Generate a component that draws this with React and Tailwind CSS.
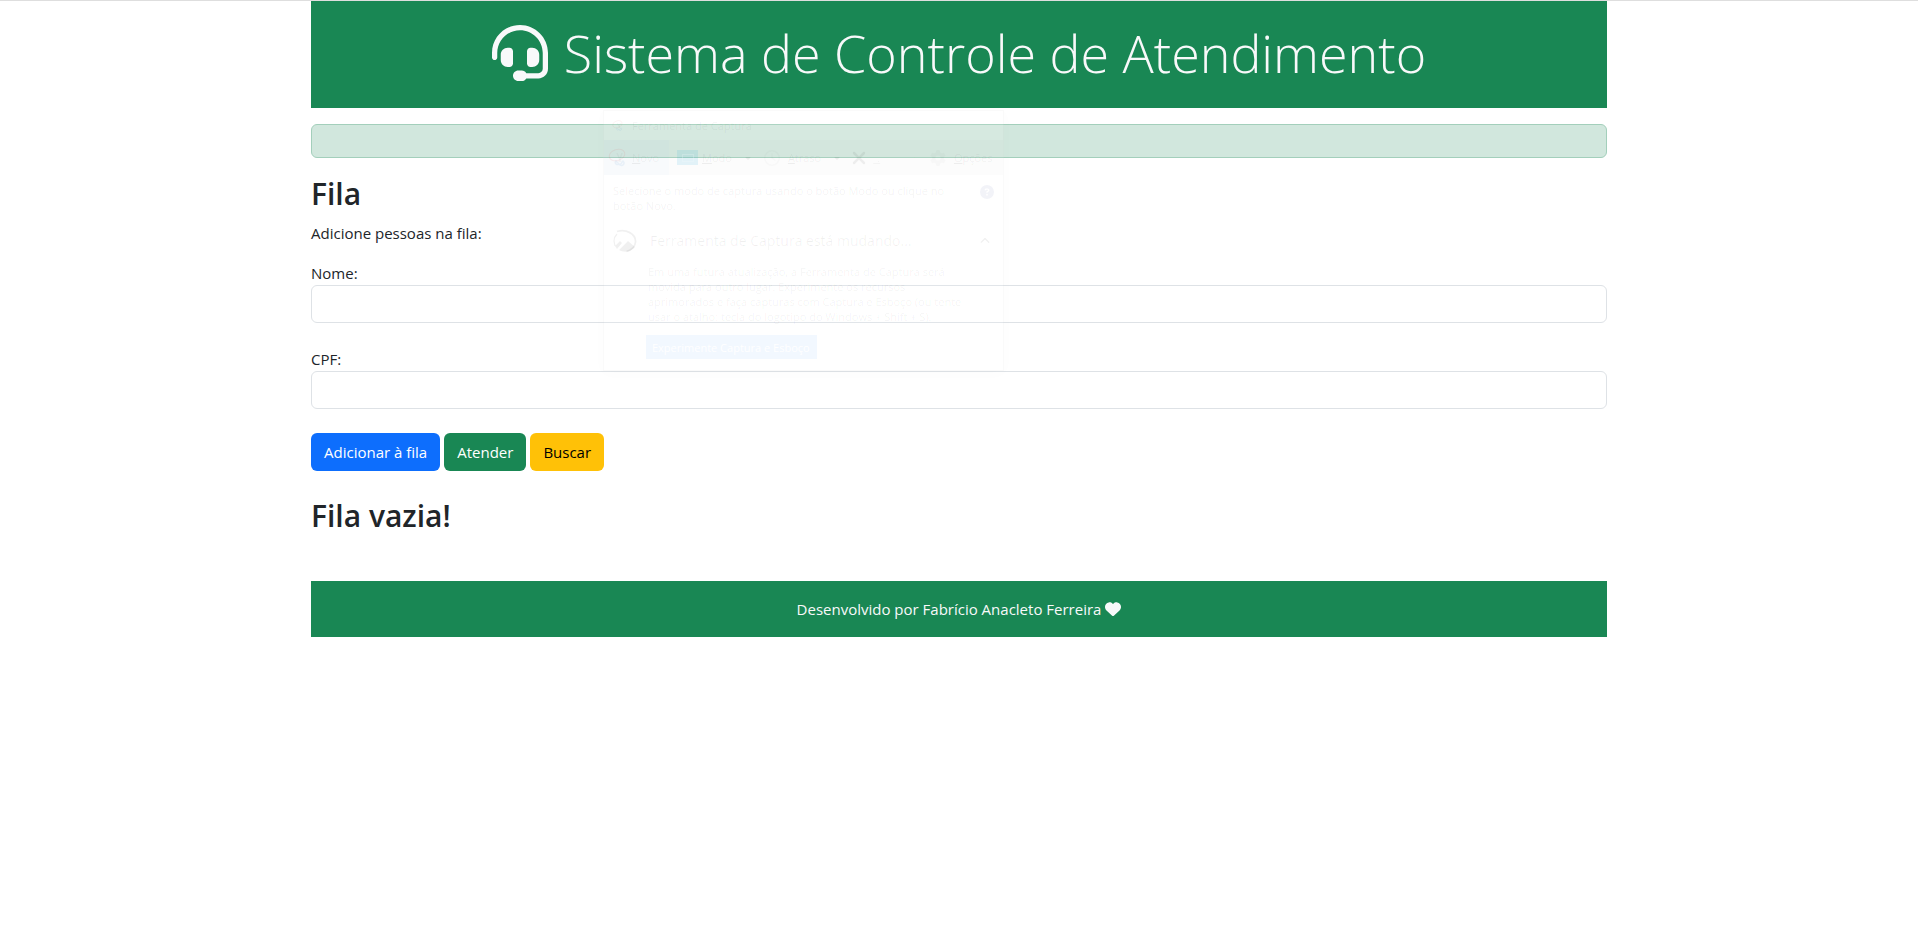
import { FaHeadset, FaHeart, FaCaretDown, FaXmark, FaChevronUp, FaCircleQuestion, FaRegClock, FaGear } from 'react-icons/fa6';

function Field({ id, label }) {
  return (
    <div className="mb-6">
      <label htmlFor={id} className="block">{label}</label>
      <input
        id={id}
        type="text"
        className="block h-[38px] w-full rounded-md border border-[#dee2e6] bg-white px-3 text-[15px] outline-none focus:border-[#86b7fe]"
      />
    </div>
  );
}

function SnipIcon({ className }) {
  return (
    <svg viewBox="0 0 20 20" className={className} fill="none">
      <ellipse cx="9" cy="7" rx="8" ry="5.500" stroke="#e03030" strokeOpacity="0.08" strokeWidth="1" transform="rotate(-18 9 7)" />
      <path d="M9 5l4 9M14 5l-3 9" stroke="#000" strokeOpacity="0.03" strokeWidth="1.500" />
      <path d="M8 13a2 2 0 1 0 3 3zM15 13a2 2 0 1 1-3 4z" stroke="#2f7fd0" strokeOpacity="0.08" strokeWidth="1.500" />
    </svg>
  );
}

function SnippingWindow() {
  return (
    <div
      aria-hidden="true"
      className="pointer-events-none absolute top-[109px] left-[603px] h-[261px] w-[401px] border border-black/2 bg-white/10 text-[11px] leading-[15px] text-black/6 shadow-[0_2px_14px_rgba(0,0,0,0.015)]"
    >
      <div className="flex h-[29px] items-center gap-2 pl-2">
        <SnipIcon className="size-3" />
        <span>Ferramenta de Captura</span>
      </div>
      <div className="flex h-[35px] items-center bg-black/1">
        <div className="flex h-full w-[65px] items-center gap-1 bg-blue-500/2 pl-1">
          <SnipIcon className="size-5" />
          <span><u>N</u>ovo</span>
        </div>
        <div className="ml-2 flex h-[15px] w-[21px] items-center justify-center bg-[#00a0e0]/10">
          <span className="h-2 w-3 border border-white/20" />
        </div>
        <span className="ml-1"><u>M</u>odo</span>
        <FaCaretDown className="ml-3 size-2" />
        <FaRegClock className="ml-3 size-4 text-black/2" />
        <span className="ml-2"><u>A</u>traso</span>
        <FaCaretDown className="ml-3 size-2" />
        <FaXmark className="ml-2 size-5" />
        <span className="ml-1 text-black/3"><u>C</u>ancelar</span>
        <FaGear className="ml-3 size-4 text-black/2" />
        <span className="ml-2"><u>O</u>pções</span>
      </div>
      <div className="flex justify-between px-[9px] pt-2">
        <p className="w-[340px]">Selecione o modo de captura usando o botão Modo ou clique no botão Novo.</p>
        <FaCircleQuestion className="mt-[2px] size-[14px] text-blue-900/6" />
      </div>
      <div className="mt-4 flex items-center px-[9px]">
        <svg viewBox="0 0 24 24" className="size-6" fill="none">
          <path d="M4 2.5C13-.5 23 5 22.500 13c-.5 5-4 8-9 9.500" stroke="currentColor" strokeWidth="1.800" />
          <path d="M1 12C1 9 2 7 4 5M1 12l1 5" stroke="currentColor" strokeWidth="1.200" />
          <path d="M2 17l5-5 2 2-5 6zM6 21l9-9 7 6c-4 5-11 6-16 3z" fill="currentColor" />
        </svg>
        <span className="ml-[13px] text-[14px] leading-6">Ferramenta de Captura está mudando...</span>
        <FaChevronUp className="mr-1 ml-auto size-[10px]" />
      </div>
      <p className="mt-[11px] ml-[44px] w-[340px] text-black/5">
        Em uma futura atualização, a Ferramenta de Captura será<br />
        movida para outro lugar. Experimente os recursos<br />
        aprimorados e faça capturas com Captura e Esboço (ou tente<br />
        usar o atalho: tecla do logotipo do Windows + Shift + S).
      </p>
      <div className="mt-[11px] ml-[42px] flex h-6 w-[171px] items-center bg-[#0078ff]/5 pl-[6px] whitespace-nowrap text-white">
        Experimente Captura e Esboço
      </div>
    </div>
  );
}

export default function App() {
  return (
    <div className="relative border-t border-[#dedede] bg-white font-['Open_Sans','Noto_Sans',sans-serif] text-[15px] leading-6 text-[#212529]">
      <div className="mx-auto max-w-[1320px] px-3">
        <header className="flex items-center justify-center gap-4 bg-[#198754] px-4 pt-[18px] pb-[22px] text-[#f8f9fa]">
          <FaHeadset className="size-14 shrink-0" />
          <h1 className="text-[52px] leading-[67px] font-light">Sistema de Controle de Atendimento</h1>
        </header>
        <div role="alert" className="my-4 h-[34px] rounded-md border border-[#a3cfbb] bg-[#d1e7dd]" />
        <main>
          <h2 className="mb-2 text-[30px] leading-[39px] font-semibold">Fila</h2>
          <p className="mb-4">Adicione pessoas na fila:</p>
          <form onSubmit={(e) => e.preventDefault()}>
            <Field id="nome" label="Nome:" />
            <Field id="cpf" label="CPF:" />
            <div className="flex flex-wrap gap-1">
              <button type="submit" className="h-[38px] rounded-md bg-[#0d6efd] px-[13px] text-white">Adicionar à fila</button>
              <button type="button" className="h-[38px] rounded-md bg-[#198754] px-[13px] text-white">Atender</button>
              <button type="button" className="h-[38px] rounded-md bg-[#ffc107] px-[13px] text-black">Buscar</button>
            </div>
          </form>
          <h2 className="mt-[25px] mb-[46px] text-[30px] leading-[39px] font-semibold">Fila vazia!</h2>
        </main>
        <footer className="flex items-center justify-center gap-1 bg-[#198754] p-4 text-[#f8f9fa]">
          <span>Desenvolvido por Fabrício Anacleto Ferreira</span>
          <FaHeart className="size-4" />
        </footer>
      </div>
      <SnippingWindow />
    </div>
  );
}
